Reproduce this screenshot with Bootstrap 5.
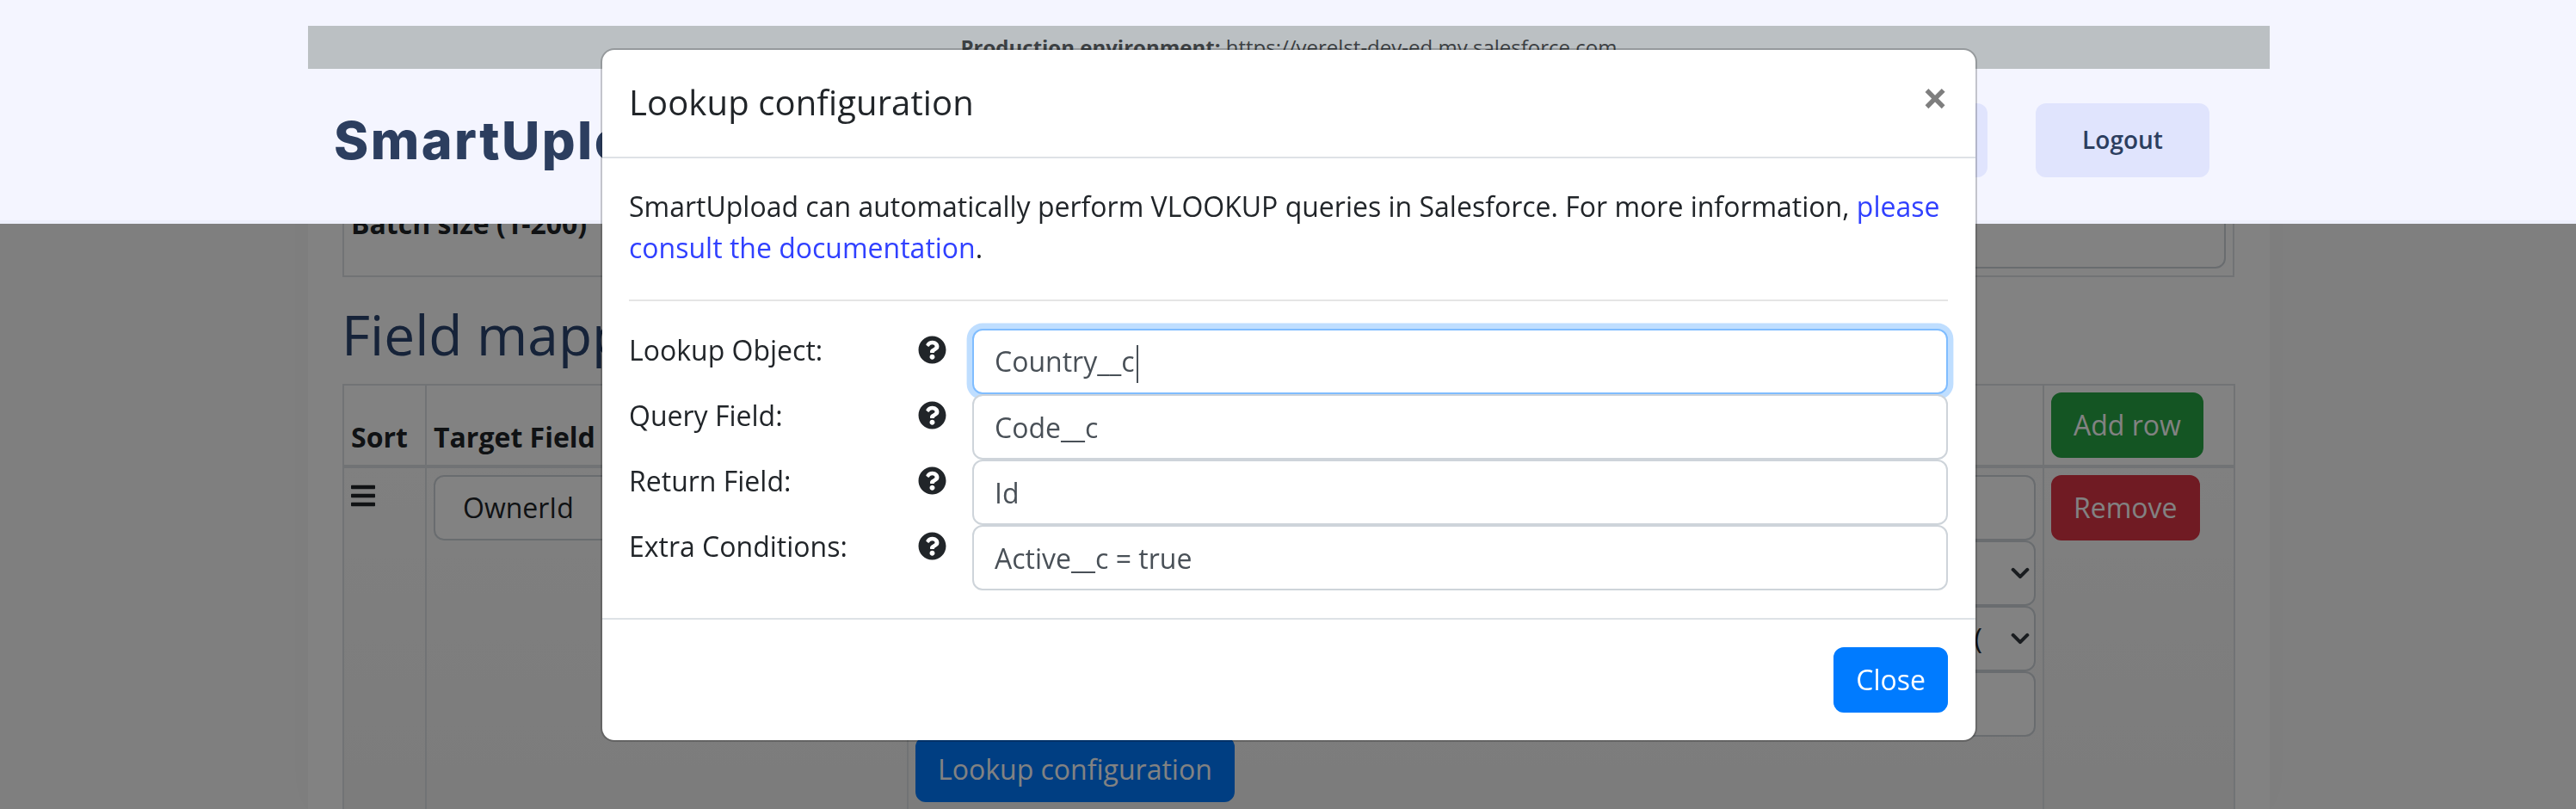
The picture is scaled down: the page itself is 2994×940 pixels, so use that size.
<!DOCTYPE html>
<html lang="en">
<head>
<meta charset="utf-8">
<title>SmartUpload</title>
<link rel="stylesheet" href="https://cdn.jsdelivr.net/npm/bootstrap@5.3.0/dist/css/bootstrap.min.css">
<style>
:root{--bs-border-width:2px;--bs-border-radius:8px;--bs-border-color:#dee2e6;--bs-body-font-family:"Open Sans",sans-serif;}
html{font-size:32px;}
body{background:#fafafa;color:#212529;overflow:hidden;height:940px;}
a{color:#3040ff;text-decoration:none;}
.form-control,.form-select{border-color:#ced4da;}
.su-top{background:#f4f5ff;border-bottom:4px solid #eef0fc;height:260px;z-index:1052;}
.su-env{width:2280px;height:50px;margin:30px 0 0 358px;background:#bbc0c3;color:#3d4144;font-size:24px;line-height:50px;}
.su-bar{width:2280px;margin:0 0 0 358px;padding:40px 70px 0 30px;}
.su-logo{font-family:Inter,sans-serif;font-weight:800;font-size:61px;letter-spacing:2.4px;color:#2c3e5f;line-height:86px;}
.su-nav{background:#e0e4fd;color:#2c3e5f;font-size:28px;font-weight:600;height:86px;width:202px;border-radius:12px;line-height:84px;text-align:center;}
.su-gap{gap:56px;}
.su-page{width:2280px;height:940px;margin:0 0 0 358px;padding:226px 41px 0 40px;background:#fff;box-shadow:0 0 40px rgba(0,0,0,.03);}
.su-batch{border:2px solid #dee2e6;padding:8px;height:96px;}
.su-batch b{line-height:48px;}
.su-batch .form-control{width:1500px;}
.su-h{font-size:64px;font-weight:400;line-height:77px;color:#2c4670;margin:28px 0 19px -1px;}
.su-table{table-layout:fixed;width:2198px;margin:0;}
.su-table th,.su-table td{padding:8px;}
.su-table thead th{vertical-align:bottom;border-bottom-width:4px;background:#fff;}
.su-table tbody td{background:linear-gradient(#fbfbfb,#efefef);height:600px;}
.su-c1{width:96px;}.su-c2{width:560px;}.su-c3{width:1320px;}.su-c4{width:222px;}
.su-bars{width:28px;height:32px;display:block;margin-top:8px;}
.su-owner{padding-left:32px;}
.su-fake{display:flex;justify-content:flex-end;padding-right:60px;color:#212529;overflow:hidden;white-space:nowrap;}
.su-select{--bs-form-select-bg-img:url("data:image/svg+xml,%3csvg xmlns='http://www.w3.org/2000/svg' viewBox='0 0 16 16'%3e%3cpath fill='none' stroke='%23343a40' stroke-linecap='round' stroke-linejoin='round' stroke-width='3' d='m2 5 6 6 6-6'/%3e%3c/svg%3e");background-size:22px 22px;background-position:right 5px center;}
.btn-primary{--bs-btn-bg:#007bff;--bs-btn-border-color:#007bff;}
.btn-success{--bs-btn-bg:#28a745;--bs-btn-border-color:#28a745;}
.btn-danger{--bs-btn-bg:#dc3545;--bs-btn-border-color:#dc3545;}
.modal-backdrop.show{opacity:.49;}
.su-modal{padding-left:2px;}
.modal-lg{--bs-modal-width:1600px;}
.modal-content{--bs-modal-border-color:rgba(0,0,0,.2);--bs-modal-inner-border-radius:8px;}
.modal-header,.modal-body{padding-left:31px;}
.modal-title{letter-spacing:.12px;margin-top:-1px;margin-bottom:1px;}
.su-x{background:none;border:0;padding:0;font-size:52px;font-weight:700;line-height:1;color:#000;opacity:.5;margin-top:-14px;margin-right:0;}
.su-rule{margin:36px 0 32px;border-top:2px solid #000;opacity:.1;}
.su-row{display:flex;height:76px;}
.su-lab{flex:0 0 336px;line-height:50px;}
.su-ico{flex:0 0 63px;padding-top:8px;line-height:0;}
.su-ico svg{width:33px;height:33px;}
.su-row .form-control{color:#495057;height:76px;}
.form-control.su-focus{border-color:#80bdff;box-shadow:0 0 0 6.4px rgba(0,123,255,.25);}
.su-caret{display:inline-block;width:2px;height:44px;background:#495057;margin-left:2px;vertical-align:middle;}
</style>
</head>
<body>
<div class="su-page">
  <div class="su-batch d-flex justify-content-between">
    <b>Batch size (1-200)</b>
    <input class="form-control" value="200">
  </div>
  <h2 class="su-h">Field mapping</h2>
  <table class="table table-bordered su-table">
    <colgroup><col class="su-c1"><col class="su-c2"><col class="su-c3"><col class="su-c4"></colgroup>
    <thead>
      <tr><th>Sort</th><th>Target Field</th><th>Source</th><th><button class="btn btn-success">Add row</button></th></tr>
    </thead>
    <tbody>
      <tr>
        <td><svg class="su-bars" viewBox="0 0 448 512"><path fill="#212529" d="M16 132h416c8.837 0 16-7.163 16-16V76c0-8.837-7.163-16-16-16H16C7.163 60 0 67.163 0 76v40c0 8.837 7.163 16 16 16zm0 160h416c8.837 0 16-7.163 16-16v-40c0-8.837-7.163-16-16-16H16c-8.837 0-16 7.163-16 16v40c0 8.837 7.163 16 16 16zm0 160h416c8.837 0 16-7.163 16-16v-40c0-8.837-7.163-16-16-16H16c-8.837 0-16 7.163-16 16v40c0 8.837 7.163 16 16 16z"/></svg></td>
        <td><input class="form-control su-owner" value="OwnerId"></td>
        <td>
          <input class="form-control" value="">
          <div class="form-select su-select">&nbsp;</div>
          <div class="form-select su-select su-fake">TEXT(</div>
          <input class="form-control" value="">
          <button class="btn btn-primary">Lookup configuration</button>
        </td>
        <td><button class="btn btn-danger">Remove</button></td>
      </tr>
    </tbody>
  </table>
</div>

<header class="su-top fixed-top">
  <div class="su-env text-center"><b>Production environment:</b> https://verelst-dev-ed.my.salesforce.com</div>
  <div class="su-bar d-flex justify-content-between align-items-center">
    <div class="su-logo">SmartUpload</div>
    <div class="d-flex su-gap">
      <div class="su-nav">Settings</div>
      <div class="su-nav">Logout</div>
    </div>
  </div>
</header>

<div class="modal-backdrop show"></div>
<div class="modal d-block su-modal">
  <div class="modal-dialog modal-lg">
    <div class="modal-content">
      <div class="modal-header">
        <h5 class="modal-title">Lookup configuration</h5>
        <button class="su-x ms-auto" type="button">×</button>
      </div>
      <div class="modal-body">
        <p class="mb-0">SmartUpload can automatically perform VLOOKUP queries in Salesforce. For more information, <a href="#">please consult the documentation</a>.</p>
        <hr class="su-rule">
        <div class="su-row">
          <div class="su-lab">Lookup Object:</div>
          <div class="su-ico"><svg viewBox="0 0 512 512"><path fill="#212529" d="M504 256c0 136.997-111.043 248-248 248S8 392.997 8 256C8 119.083 119.043 8 256 8s248 111.083 248 248zM262.655 90c-54.497 0-89.255 22.957-116.549 63.758-3.536 5.286-2.353 12.415 2.715 16.258l34.699 26.31c5.205 3.947 12.621 3.008 16.665-2.122 17.864-22.658 30.113-35.797 57.303-35.797 20.429 0 45.698 13.148 45.698 32.958 0 14.976-12.363 22.667-32.534 33.976C247.128 238.528 216 254.941 216 296v4c0 6.627 5.373 12 12 12h56c6.627 0 12-5.373 12-12v-1.333c0-28.462 83.186-29.647 83.186-106.667 0-58.002-60.165-102-116.531-102zM256 338c-25.365 0-46 20.635-46 46 0 25.364 20.635 46 46 46s46-20.636 46-46c0-25.365-20.635-46-46-46z"/></svg></div>
          <div class="form-control su-focus">Country__c<span class="su-caret"></span></div>
        </div>
        <div class="su-row">
          <div class="su-lab">Query Field:</div>
          <div class="su-ico"><svg viewBox="0 0 512 512"><path fill="#212529" d="M504 256c0 136.997-111.043 248-248 248S8 392.997 8 256C8 119.083 119.043 8 256 8s248 111.083 248 248zM262.655 90c-54.497 0-89.255 22.957-116.549 63.758-3.536 5.286-2.353 12.415 2.715 16.258l34.699 26.31c5.205 3.947 12.621 3.008 16.665-2.122 17.864-22.658 30.113-35.797 57.303-35.797 20.429 0 45.698 13.148 45.698 32.958 0 14.976-12.363 22.667-32.534 33.976C247.128 238.528 216 254.941 216 296v4c0 6.627 5.373 12 12 12h56c6.627 0 12-5.373 12-12v-1.333c0-28.462 83.186-29.647 83.186-106.667 0-58.002-60.165-102-116.531-102zM256 338c-25.365 0-46 20.635-46 46 0 25.364 20.635 46 46 46s46-20.636 46-46c0-25.365-20.635-46-46-46z"/></svg></div>
          <input class="form-control" value="Code__c">
        </div>
        <div class="su-row">
          <div class="su-lab">Return Field:</div>
          <div class="su-ico"><svg viewBox="0 0 512 512"><path fill="#212529" d="M504 256c0 136.997-111.043 248-248 248S8 392.997 8 256C8 119.083 119.043 8 256 8s248 111.083 248 248zM262.655 90c-54.497 0-89.255 22.957-116.549 63.758-3.536 5.286-2.353 12.415 2.715 16.258l34.699 26.31c5.205 3.947 12.621 3.008 16.665-2.122 17.864-22.658 30.113-35.797 57.303-35.797 20.429 0 45.698 13.148 45.698 32.958 0 14.976-12.363 22.667-32.534 33.976C247.128 238.528 216 254.941 216 296v4c0 6.627 5.373 12 12 12h56c6.627 0 12-5.373 12-12v-1.333c0-28.462 83.186-29.647 83.186-106.667 0-58.002-60.165-102-116.531-102zM256 338c-25.365 0-46 20.635-46 46 0 25.364 20.635 46 46 46s46-20.636 46-46c0-25.365-20.635-46-46-46z"/></svg></div>
          <input class="form-control" value="Id">
        </div>
        <div class="su-row">
          <div class="su-lab">Extra Conditions:</div>
          <div class="su-ico"><svg viewBox="0 0 512 512"><path fill="#212529" d="M504 256c0 136.997-111.043 248-248 248S8 392.997 8 256C8 119.083 119.043 8 256 8s248 111.083 248 248zM262.655 90c-54.497 0-89.255 22.957-116.549 63.758-3.536 5.286-2.353 12.415 2.715 16.258l34.699 26.31c5.205 3.947 12.621 3.008 16.665-2.122 17.864-22.658 30.113-35.797 57.303-35.797 20.429 0 45.698 13.148 45.698 32.958 0 14.976-12.363 22.667-32.534 33.976C247.128 238.528 216 254.941 216 296v4c0 6.627 5.373 12 12 12h56c6.627 0 12-5.373 12-12v-1.333c0-28.462 83.186-29.647 83.186-106.667 0-58.002-60.165-102-116.531-102zM256 338c-25.365 0-46 20.635-46 46 0 25.364 20.635 46 46 46s46-20.636 46-46c0-25.365-20.635-46-46-46z"/></svg></div>
          <input class="form-control" value="Active__c = true">
        </div>
      </div>
      <div class="modal-footer">
        <button class="btn btn-primary" type="button">Close</button>
      </div>
    </div>
  </div>
</div>
<script src="https://cdn.jsdelivr.net/npm/bootstrap@5.3.0/dist/js/bootstrap.bundle.min.js"></script>
</body>
</html>
